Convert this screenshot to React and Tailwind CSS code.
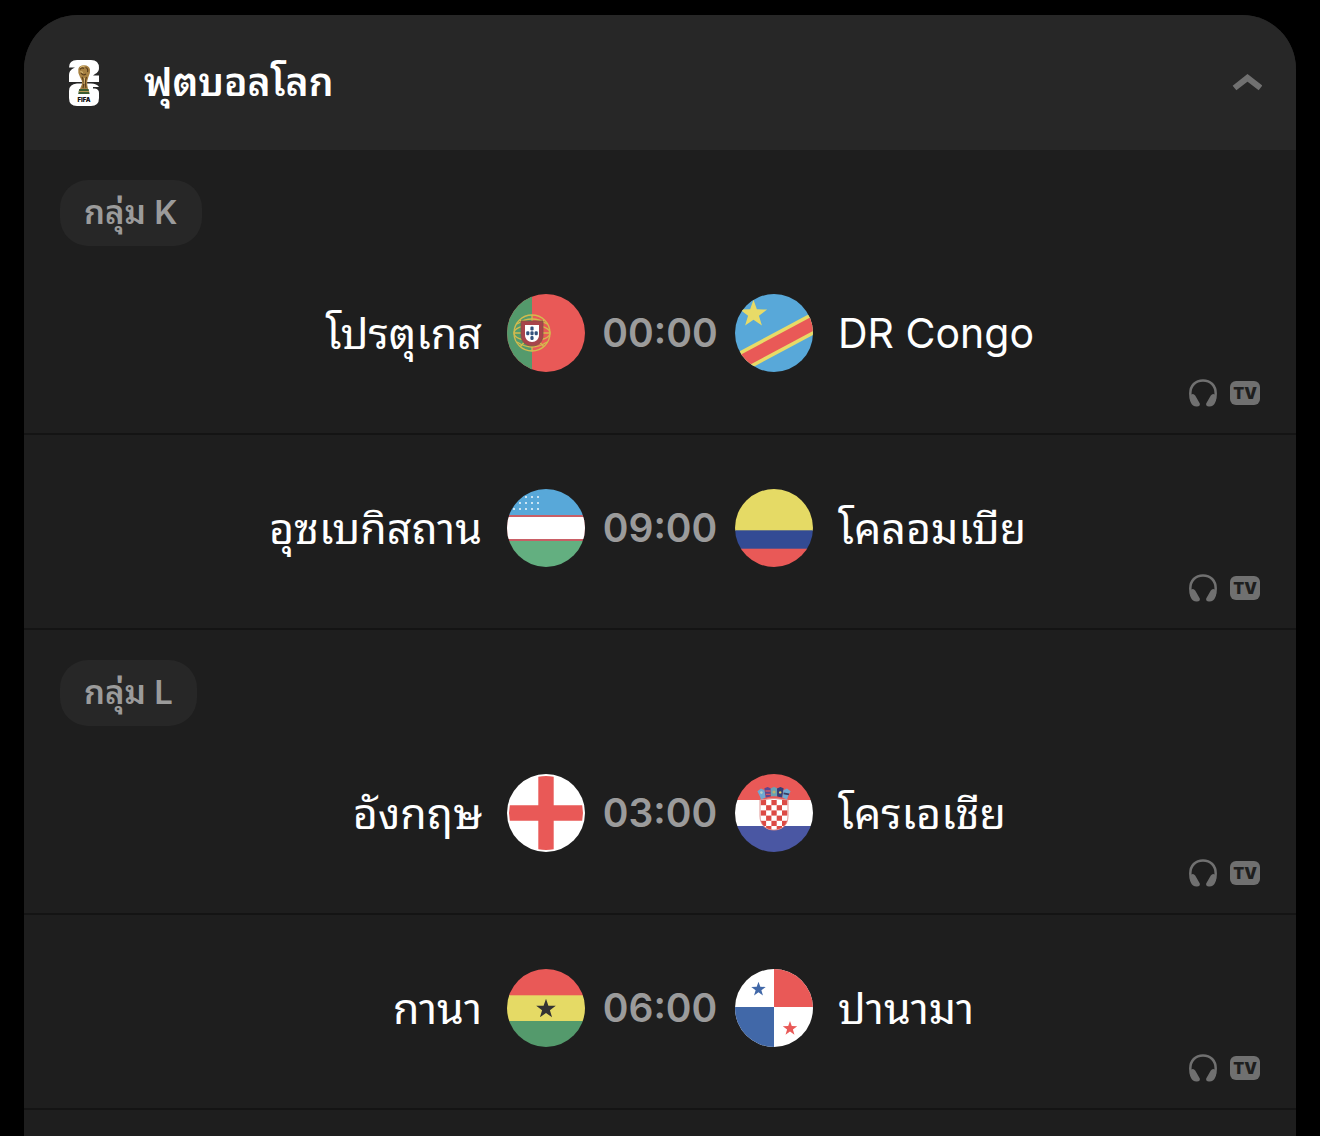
import React, { useState } from "react";

// -------------------- DATA --------------------
const groups = [
  {
    name: "กลุ่ม K",
    matches: [
      { home: "โปรตุเกส", homeFlag: "pt", time: "00:00", away: "DR Congo", awayFlag: "cd" },
      { home: "อุซเบกิสถาน", homeFlag: "uz", time: "09:00", away: "โคลอมเบีย", awayFlag: "co" },
    ],
  },
  {
    name: "กลุ่ม L",
    matches: [
      { home: "อังกฤษ", homeFlag: "en", time: "03:00", away: "โครเอเชีย", awayFlag: "hr" },
      { home: "กานา", homeFlag: "gh", time: "06:00", away: "ปานามา", awayFlag: "pa" },
    ],
  },
];

// -------------------- FLAGS --------------------
function Star({ cx, cy, r, fill }) {
  const points = Array.from({ length: 10 }, (_, i) => {
    const radius = i % 2 ? r * 0.4 : r;
    const a = (Math.PI / 5) * i - Math.PI / 2;
    return `${(cx + radius * Math.cos(a)).toFixed(2)},${(cy + radius * Math.sin(a)).toFixed(2)}`;
  }).join(" ");
  return <polygon points={points} fill={fill} />;
}

const flags = {
  pt: (
    <>
      <rect width="78" height="78" fill="#e95957" />
      <rect width="25" height="78" fill="#549a6c" />
      <g fill="none" stroke="#d3bb4e" strokeWidth="1.3">
        <circle cx="25" cy="39" r="18" />
        <path d="M25 21v36M7 39h36" />
        <ellipse cx="25" cy="39" rx="18" ry="8" />
        <path d="M10 30Q25 20 40 30M10 48Q25 58 40 48M13 26L37 53M37 26L13 53" />
      </g>
      <path d="M14 27h22v14c0 7-5 11-11 11s-11-4-11-11z" fill="#a8444b" stroke="#7d5a42" strokeWidth="0.8" />
      <path d="M18 31h14v10c0 4-3 7-7 7s-7-3-7-7z" fill="#fff" />
      <g fill="#34527c">
        <rect x="23.4" y="32.5" width="3.2" height="4" rx="1.3" />
        <rect x="19.2" y="37.3" width="3.2" height="4" rx="1.3" />
        <rect x="23.4" y="37.3" width="3.2" height="4" rx="1.3" />
        <rect x="27.6" y="37.3" width="3.2" height="4" rx="1.3" />
        <rect x="23.4" y="42.1" width="3.2" height="4" rx="1.3" />
      </g>
    </>
  ),
  cd: (
    <>
      <rect width="78" height="78" fill="#58a8d9" />
      <path d="M0 59.7L78 18.1V41.1L0 82.7z" fill="#e8db67" />
      <path d="M0 63.7L78 22.1V37.1L0 78.7z" fill="#e95957" />
      <Star cx={18.5} cy={20} r={14.3} fill="#e8db67" />
    </>
  ),
  uz: (
    <>
      <rect width="78" height="28" fill="#58a8d9" />
      <rect y="26" width="78" height="26" fill="#c95f66" />
      <rect y="28" width="78" height="22" fill="#fff" />
      <rect y="52" width="78" height="26" fill="#63af80" />
      <g fill="#e6f3fb">
        {[[19, 8], [25, 8], [31, 8], [13, 14], [19, 14], [25, 14], [31, 14], [7, 20], [13, 20], [19, 20], [25, 20], [31, 20]].map(([x, y]) => (
          <circle key={`${x}-${y}`} cx={x} cy={y} r="1.1" />
        ))}
      </g>
    </>
  ),
  co: (
    <>
      <rect width="78" height="42" fill="#e5da65" />
      <rect y="41.3" width="78" height="19" fill="#334b94" />
      <rect y="59.7" width="78" height="19" fill="#e95957" />
    </>
  ),
  en: (
    <>
      <rect width="78" height="78" fill="#fff" />
      <path
        d="M31.3 2.8Q39 1.2 46.7 2.8V31.2H75.2Q76.8 39 75.2 46.8H46.7V75.2Q39 76.8 31.3 75.2V46.8H2.8Q1.2 39 2.8 31.2H31.3z"
        fill="#e95957"
      />
    </>
  ),
  hr: (
    <>
      <rect width="78" height="26" fill="#e95957" />
      <rect y="26" width="78" height="26" fill="#fff" />
      <rect y="52" width="78" height="26" fill="#4a57a3" />
      <clipPath id="hr-shield">
        <path d="M25 26Q39 23 53 26V42C53 51 47 56 39 56S25 51 25 42z" />
      </clipPath>
      <g clipPath="url(#hr-shield)">
        <rect x="24" y="24" width="30" height="34" fill="#fff" />
        {[0, 1, 2, 3, 4, 5].map(row =>
          [0, 1, 2, 3, 4].map(col =>
            (row + col) % 2 === 0 ? (
              <rect key={`${row}-${col}`} x={25.8 + col * 5.3} y={26 + row * 5.2} width="5.3" height="5.2" fill="#dc4a45" />
            ) : null
          )
        )}
      </g>
      <path d="M25 26Q39 23 53 26V42C53 51 47 56 39 56S25 51 25 42z" fill="none" stroke="#e08a88" strokeWidth="0.9" />
      {/* crown of five small shields */}
      <path d="M22.4 17.2L26 14.5L29.6 16.2L30.6 23.4L26 25.4L25 22.6z" fill="#6fa9d2" />
      <path d="M29.4 14.2L32.6 13L36 14.6L35.8 22.4L30.8 23.6z" fill="#5b4790" />
      <path d="M35.600 14.600L39 12.800L42.400 14.600L42 22.300H36z" fill="#6aa3b4" />
      <path d="M42 14.600L45.400 13L48.600 14.200L47.200 23.600L42.200 22.400z" fill="#333f78" />
      <path d="M48.400 16.200L52 14.500L55.600 17.200L53 22.600L52 25.400L47.400 23.400z" fill="#6fa9d2" />
      <path d="M30.400 17h5.200M31 20.400h4.600" stroke="#d35863" strokeWidth="1.3" />
      <path d="M48.600 19.400l5.400 1" stroke="#3a3c63" strokeWidth="1.8" />
      <circle cx="26.4" cy="18.6" r="1.3" fill="#b5cfc9" />
      <circle cx="39" cy="18" r="1.6" fill="#b9b271" />
      <circle cx="45.2" cy="18.4" r="1.2" fill="#dfcf62" />
    </>
  ),
  gh: (
    <>
      <rect width="78" height="27" fill="#e95957" />
      <rect y="26.3" width="78" height="26" fill="#e5da65" />
      <rect y="52" width="78" height="26" fill="#549a6c" />
      <Star cx={39} cy={40} r={10.3} fill="#333333" />
    </>
  ),
  pa: (
    <>
      <rect width="78" height="78" fill="#fff" />
      <rect x="39" width="39" height="38" fill="#e95957" />
      <rect y="38" width="39" height="40" fill="#4168a8" />
      <Star cx={23.5} cy={20.3} r={7.6} fill="#4168a8" />
      <Star cx={55} cy={59.5} r={7.6} fill="#e95957" />
    </>
  ),
};

function Flag({ code }) {
  return (
    <svg viewBox="0 0 78 78" className="size-[78px] shrink-0 rounded-full" aria-hidden="true">
      {flags[code]}
    </svg>
  );
}

// -------------------- ICONS --------------------
function TrophyLogo() {
  return (
    <svg viewBox="0 0 30 46" className="h-[46px] w-[30px] shrink-0" role="img" aria-label="FIFA">
      <path d="M8 0H22Q30 0 30 8Q30 12 26 14L24 15.500H30V22H0V15Q0 10.500 4 8.500L6 7.500H0Q0 0 8 0z" fill="#fff" />
      <path d="M8 23.500H22Q28 23.500 30 27H24V28.500H26Q30 29 30 33V38Q30 46 22 46H8Q0 46 0 38V31Q0 24 8 23.500z" fill="#fff" />
      <path d="M9.300 9Q10 5.400 15 5.200Q20.300 5.400 21 9.500Q21.600 13 19.400 17Q17.800 21 18.200 24.500L19.200 30H10.600L13 24Q13.400 20.500 11 17Q8.600 12.500 9.300 9z" fill="#a78142" />
      <path d="M11 9.500Q12.500 7 15 8.500M16.500 7.500Q19.500 8.500 18.500 12M12 13Q14 16 17 14M13 17Q15.500 21 14 28M17.500 17Q15.500 22 17 28" fill="none" stroke="#5b3f1d" strokeWidth="1.2" />
      <path d="M11 7.500Q13 5.800 15.500 6.300M11.500 11.500L14 12.500M15.500 18L15 24" fill="none" stroke="#dfc07c" strokeWidth="1" />
      <path d="M10.200 29h9.400l1 5H9.200z" fill="#3c5d31" />
      <path d="M9.800 31.500h10.200" stroke="#b69a55" strokeWidth="1" />
      <text x="15" y="41.500" textAnchor="middle" fontSize="6" fontWeight="900" fontFamily="Inter, sans-serif" fill="#111">
        FIFA
      </text>
    </svg>
  );
}

function Chevron({ open }) {
  return (
    <svg
      viewBox="0 0 30 18"
      className={`h-[18px] w-[30px] shrink-0 ${open ? "" : "rotate-180"}`}
      fill="none"
      stroke="#707070"
      strokeWidth="6"
      aria-hidden="true"
    >
      <path d="M2.500 14L15.500 3.800L28.500 14" />
    </svg>
  );
}

function Headphones() {
  return (
    <svg viewBox="0 0 28 28" className="size-7" role="img" aria-label="Audio">
      <path d="M2.500 22Q1.300 18.500 1.300 14.500C1.300 6.500 6.500 1.500 14 1.500S26.700 6.500 26.700 14.500Q26.700 18.500 25.500 22" fill="none" stroke="#707070" strokeWidth="2.500" />
      <path d="M1 16.500Q4 13.500 6.200 16.500L10.800 24.500Q11.400 27.500 8 27.600Q3.500 27.800 1.800 23.500Q.4 20 1 16.500z" fill="#707070" />
      <path d="M27 16.500Q24 13.500 21.800 16.500L17.200 24.500Q16.600 27.500 20 27.600Q24.500 27.800 26.200 23.500Q27.600 20 27 16.500z" fill="#707070" />
    </svg>
  );
}

// -------------------- MATCH --------------------
function TeamName({ name }) {
  // Thai glyphs run smaller than Latin at the same size
  const thai = /[\u0E00-\u0E7F]/.test(name);
  return <span className={`whitespace-nowrap ${thai ? "text-[43px]" : "text-[41px]"}`}>{name}</span>;
}

function MatchRow({ match, first }) {
  return (
    <li className={`border-b-2 border-[#141414] pb-[26px] ${first ? "pt-12" : "pt-[54px]"}`}>
      <div className="grid grid-cols-[1fr_150px_1fr] items-center leading-[78px] text-white">
        <div className="flex h-[78px] items-center justify-end gap-[25px]">
          <TeamName name={match.home} />
          <Flag code={match.homeFlag} />
        </div>
        <time className="text-center text-[39px] font-semibold text-[#9b9b9b]">{match.time}</time>
        <div className="flex h-[78px] items-center gap-[25px]">
          <Flag code={match.awayFlag} />
          <TeamName name={match.away} />
        </div>
      </div>
      <div className="mt-[7px] flex h-7 items-center justify-end gap-[13px] pr-9">
        <Headphones />
        <span className="flex h-6 w-[30px] items-center justify-center rounded-md bg-[#707070] text-base font-black text-[#1e1e1e]">
          TV
        </span>
      </div>
    </li>
  );
}

export default function App() {
  const [open, setOpen] = useState(true);

  return (
    <main className="min-h-screen bg-black px-6 pt-[15px] font-['Inter','Noto_Sans_Thai_Looped','Noto_Sans_Thai','Noto_Sans',sans-serif]">
      <section className="min-h-[calc(100vh-15px)] overflow-hidden rounded-t-[54px] bg-[#1e1e1e]">
        {/* -------------------- HEADER -------------------- */}
        <h2 className="bg-[#272727]">
          <button
            type="button"
            aria-expanded={open}
            onClick={() => setOpen(!open)}
            className="flex h-[135px] w-full items-center pr-[34px] pl-[45px] text-left"
          >
            <TrophyLogo />
            <span className="ml-[45px] flex-1 text-[39px] font-semibold text-white">ฟุตบอลโลก</span>
            <Chevron open={open} />
          </button>
        </h2>

        {/* -------------------- GROUPS -------------------- */}
        {open &&
          groups.map(group => (
            <div key={group.name} className="pt-[30px]">
              <h3 className="ml-9 flex h-[66px] w-fit items-center rounded-[28px] bg-[#272727] px-6 text-[33px] font-semibold text-[#9b9b9b]">
                {group.name}
              </h3>
              <ul>
                {group.matches.map((m, i) => (
                  <MatchRow key={m.home} match={m} first={i === 0} />
                ))}
              </ul>
            </div>
          ))}
      </section>
    </main>
  );
}
